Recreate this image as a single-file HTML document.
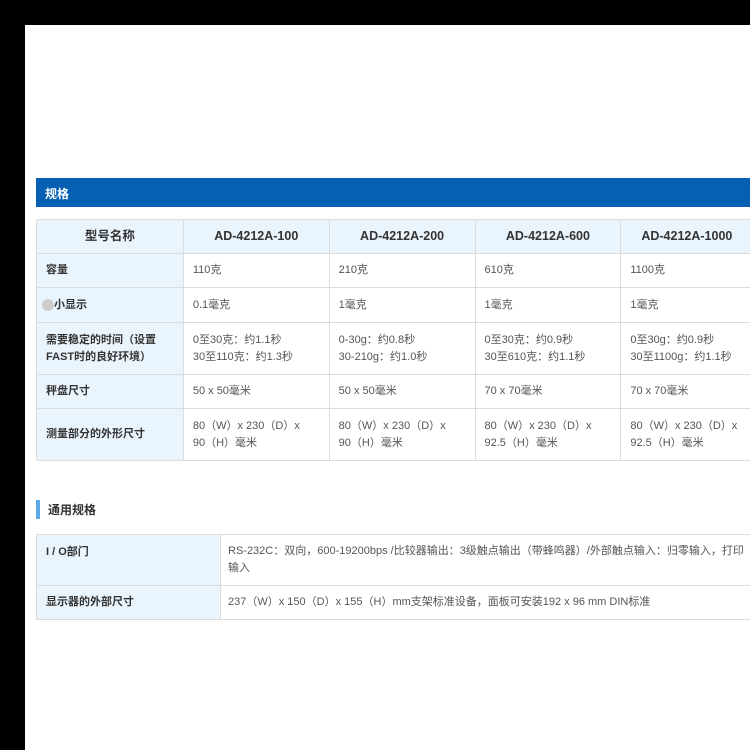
<!DOCTYPE html>
<html><head><meta charset="utf-8"><style>
*{margin:0;padding:0;box-sizing:border-box}
body{width:750px;height:750px;background:#000;position:relative;overflow:hidden;font-family:"Liberation Sans","Noto Sans CJK SC",sans-serif;}
.page{position:absolute;left:25px;top:25px;width:725px;height:725px;background:#fff}
.bar{position:absolute;left:36px;top:178px;width:714px;height:29px;background:#0560b4;color:#fff;font-size:12px;font-weight:bold;padding:7px 0 0 9px}
table{position:absolute;border-collapse:collapse;font-size:11px;color:#555}
td{border:1px solid #dcdcdc;padding:0 9px;vertical-align:middle;line-height:17px;white-space:nowrap}
td.h{background:#eaf4fd;color:#333;font-weight:bold}
tr.hd td{background:#eaf4fd;color:#333;font-weight:bold;font-size:12.5px;text-align:center}
.acc{position:absolute;left:36px;top:500px;width:4px;height:19px;background:#5aaae8}
.t2{position:absolute;left:48px;top:501px;font-size:12px;font-weight:bold;color:#333}
</style></head><body>
<div class="page"></div>
<div class="bar">规格</div>
<table style="left:36px;top:219px;width:760px">
<colgroup><col style="width:147px"><col style="width:146px"><col style="width:146px"><col style="width:146px"><col style="width:175px"></colgroup>
<tr class="hd" style="height:34px"><td>型号名称</td><td>AD-4212A-100</td><td>AD-4212A-200</td><td>AD-4212A-600</td><td style="text-align:left;padding-left:20px">AD-4212A-1000</td></tr>
<tr style="height:34px"><td class="h">容量</td><td>110克</td><td>210克</td><td>610克</td><td>1100克</td></tr>
<tr style="height:35px"><td class="h"><span style="display:inline-block;width:12px;height:12px;background:#ccc;border-radius:6px;vertical-align:middle;margin-left:-4px"></span>小显示</td><td>0.1毫克</td><td>1毫克</td><td>1毫克</td><td>1毫克</td></tr>
<tr style="height:52px"><td class="h">需要稳定的时间（设置<br>FAST时的良好环境）</td><td>0至30克：约1.1秒<br>30至110克：约1.3秒</td><td>0-30g：约0.8秒<br>30-210g：约1.0秒</td><td>0至30克：约0.9秒<br>30至610克：约1.1秒</td><td>0至30g：约0.9秒<br>30至1100g：约1.1秒</td></tr>
<tr style="height:34px"><td class="h">秤盘尺寸</td><td>50 x 50毫米</td><td>50 x 50毫米</td><td>70 x 70毫米</td><td>70 x 70毫米</td></tr>
<tr style="height:52px"><td class="h">测量部分的外形尺寸</td><td>80（W）x 230（D）x<br>90（H）毫米</td><td>80（W）x 230（D）x<br>90（H）毫米</td><td>80（W）x 230（D）x<br>92.5（H）毫米</td><td>80（W）x 230（D）x<br>92.5（H）毫米</td></tr>
</table>
<div class="acc"></div><div class="t2">通用规格</div>
<table style="left:36px;top:534px;width:760px">
<colgroup><col style="width:184px"><col></colgroup>
<tr style="height:51px"><td class="h" style="vertical-align:top;padding-top:9px">I / O部门</td><td style="vertical-align:top;padding-top:8px;padding-left:7px">RS-232C：双向，600-19200bps /比较器输出：3级触点输出（带蜂鸣器）/外部触点输入：归零输入，打印<br>输入</td></tr>
<tr style="height:34px"><td class="h">显示器的外部尺寸</td><td style="padding-left:7px">237（W）x 150（D）x 155（H）mm支架标准设备，面板可安装192 x 96 mm DIN标准</td></tr>
</table>
</body></html>
